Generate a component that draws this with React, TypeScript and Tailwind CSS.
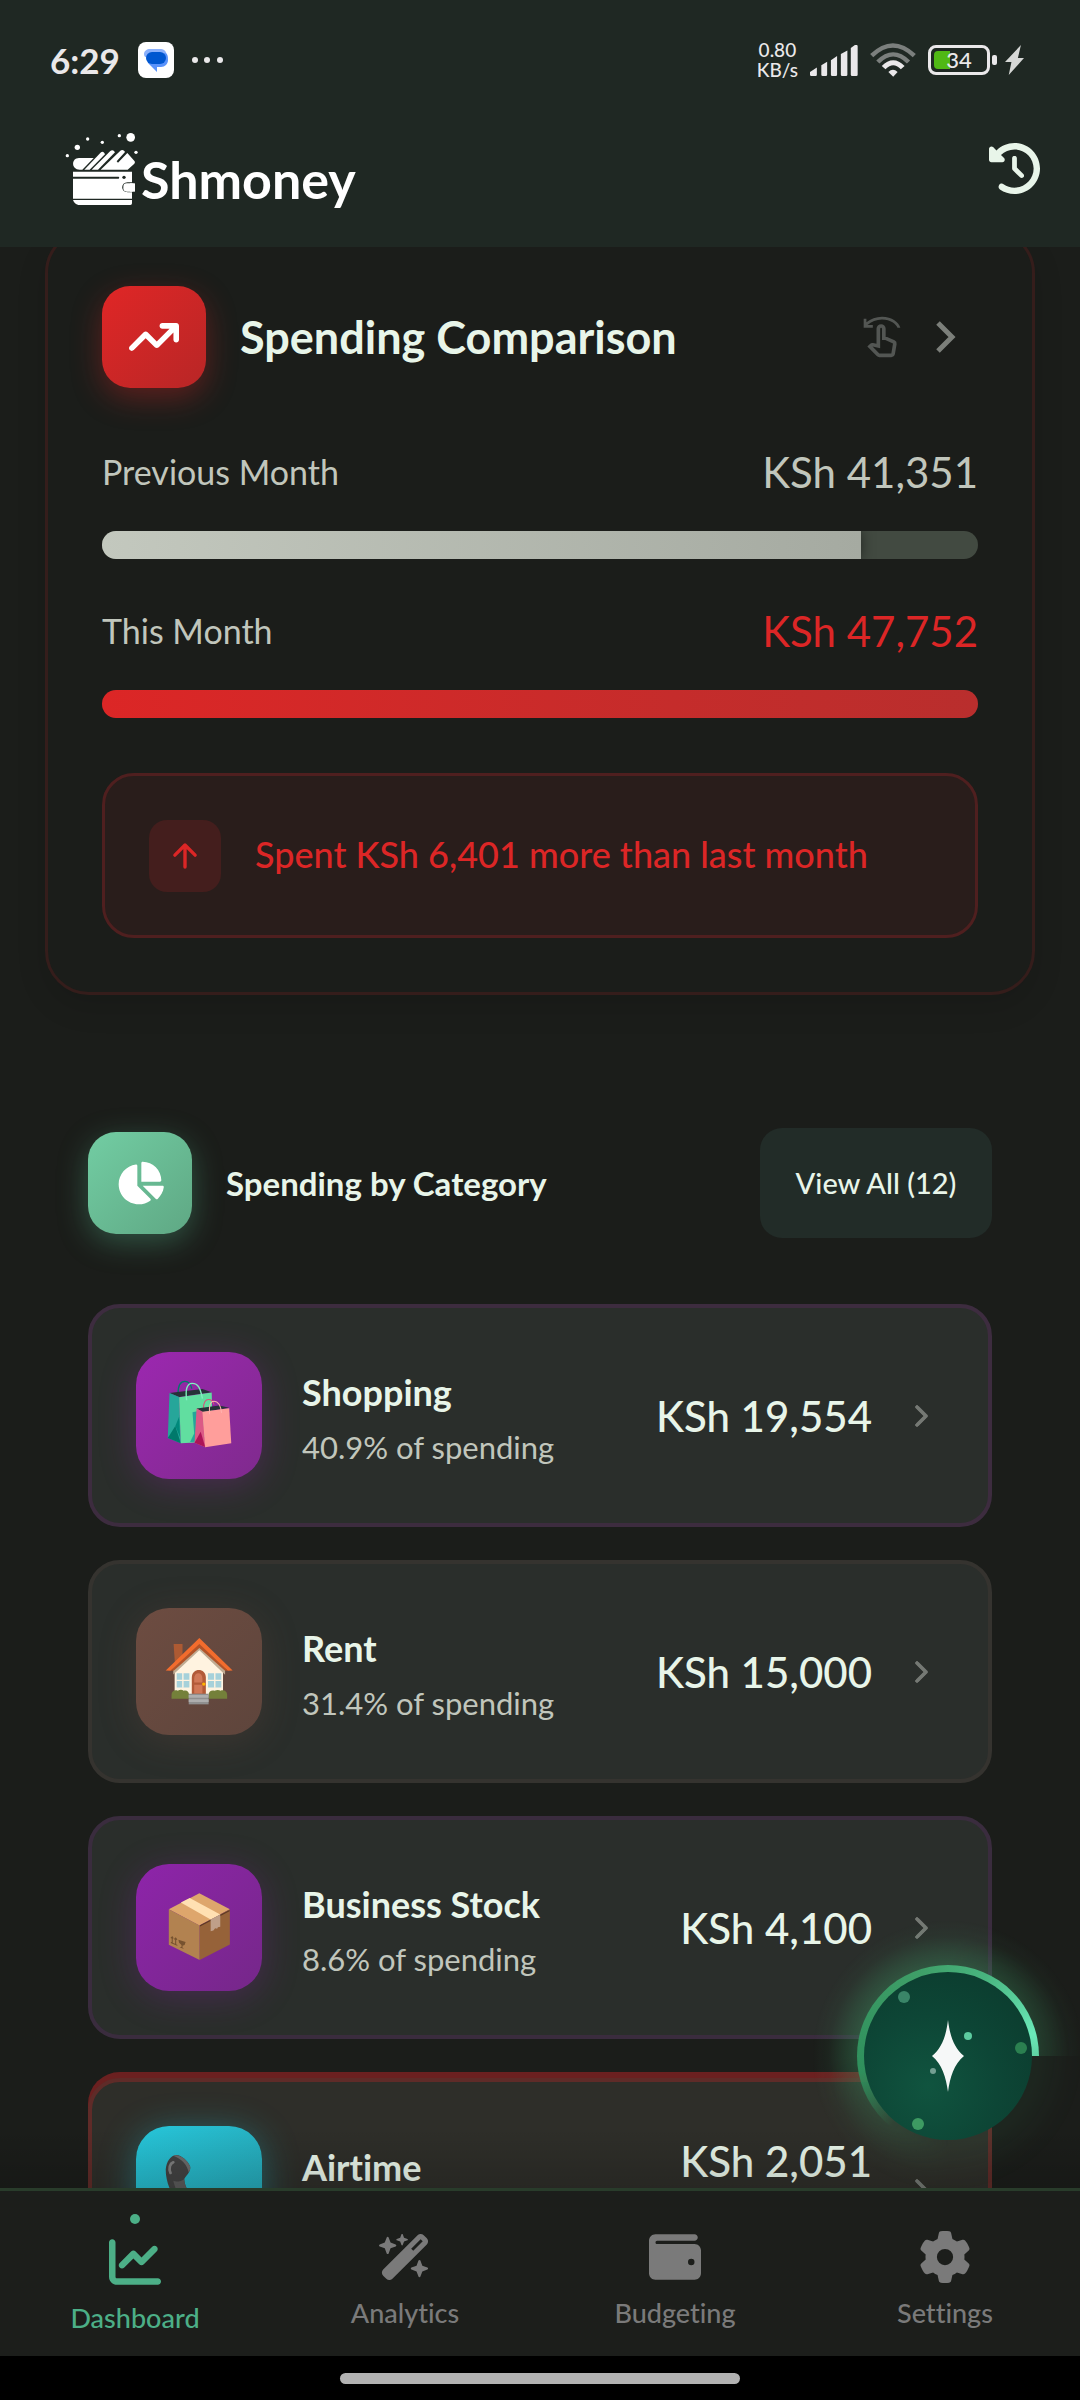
import type { ReactNode } from "react";
import { FaArrowTrendUp, FaChartLine, FaChartPie, FaChevronRight, FaClockRotateLeft, FaGear, FaWallet, FaWandMagicSparkles } from "react-icons/fa6";
import { IoArrowUpOutline } from "react-icons/io5";
import { MdOutlineSwipeLeft } from "react-icons/md";

type Category = {
  name: string;
  share?: string;
  amount: string;
  art: ReactNode;
  card: string;
  tile: string;
  overBudget?: boolean;
};

function BagsArt() {
  return (
    <svg viewBox="303 294 204 220" preserveAspectRatio="none" className="h-[73px] w-[70px]" aria-hidden="true">
      <path d="M344 338c0-24 8-37 20-37s17 8 20 22" fill="none" stroke="#00796b" strokeWidth="4" />
      <path d="M319 336l96-12 27 10-95 14z" fill="#263238" />
      <path d="M319 336l28 12 5 140-38-16z" fill="#26a69a" />
      <path d="M314 472l22-36 16 52z" fill="#00796b" />
      <path d="M336 436l11-28 3 62z" fill="#00897b" />
      <path d="M347 349l95-14 3 120-50 30-43 3z" fill="#61dea0" />
      <path d="M386 394l14-3v92l-21 1 12-26z" fill="#26a69a" />
      <path d="M369 358c-4-30 0-51 16-51 18 0 24 15 30 46" fill="none" stroke="#82efc0" strokeWidth="4" />
      <path d="M418 384c0-17 5-28 15-28 9 0 13 5 16 15" fill="none" stroke="#d8527c" strokeWidth="3" />
      <path d="M398 383l66-9 29 7-78 13z" fill="#263238" />
      <path d="M398 383l18 10 8 107-32-14z" fill="#db5a86" />
      <path d="M392 486l18-33 13 46z" fill="#ad1457" />
      <path d="M415 393l78-11 6 106-76 12z" fill="#ff9e9b" />
      <path d="M436 400c-2-24 1-39 13-39 14 0 19 13 22 35" fill="none" stroke="#ffb3ae" strokeWidth="3" />
    </svg>
  );
}

function HouseArt() {
  return (
    <svg viewBox="303 1062 204 220" preserveAspectRatio="none" className="h-[73px] w-[70px]" aria-hidden="true">
      <path d="M331 1089h26v45l-22 16z" fill="#ad5a33" />
      <path d="M334 1165l72-72 69 72v78H334z" fill="#fff3e0" />
      <path d="M330 1162l76-72 75 72v20l-75-74-76 73z" fill="#bfab93" />
      <path d="M308 1169l98-98 97 98-14 1-83-78-84 78z" fill="#f26c2d" />
      <path d="M322 1170l84-81 83 81-9-1-74-68-74 68z" fill="#b25328" />
      <path d="M340 1177h37v43h-37zM431 1177h39v43h-39z" fill="#a6d1da" />
      <path d="M358 1176v45M339 1199h39M451 1176v45M430 1199h41" stroke="#fff3e0" strokeWidth="4" />
      <path d="M384 1241v-50c0-31 41-31 41 0v50z" fill="#b25a38" />
      <path d="M391 1205v-12c0-21 24-21 24 0v12zM391 1212h24v26h-24z" fill="#d17857" />
      <circle cx="419" cy="1210" r="5" fill="#ffb300" />
      <path d="M325 1254v-12c0-11 10-16 18-12 7-4 14-3 17 0 9-3 16 2 16 12v12zM433 1254v-12c0-11 10-15 17-12 7-3 13-3 18 0 9-4 19 2 19 12v12z" fill="#74803a" />
      <path d="M375 1239h58v32h-58z" fill="#8f8f8f" />
      <path d="M375 1243h58v8h-58zM375 1256h58v8h-58z" fill="#aeaeae" />
    </svg>
  );
}

function PackageArt() {
  return (
    <svg viewBox="303 329 204 220" preserveAspectRatio="none" className="h-[73px] w-[70px]" aria-hidden="true">
      <path d="M317 384l89-48 89 48-89 49z" fill="#dea66c" />
      <path d="M317 384l90 49v104l-90-46z" fill="#b28250" />
      <path d="M495 384l-88 49v104l88-47z" fill="#966239" />
      <path d="M408 432l86-46v4l-86 46z" fill="#5d3a23" />
      <path d="M352 364l26-14 89 50-28 15z" fill="#ffe0b2" />
      <path d="M439 415l28-15v37l-7 1-2 5-6-2-5 7-8 2z" fill="#bf9f89" />
      <path d="M323 484l19 9M327 486v-18m-4 3l4-4 3 5M337 490v-18m-4 3l4-4 4 5" fill="none" stroke="#76522f" strokeWidth="3" />
      <path d="M345 476l21 7-3 9-6 2v6l5 4-13-5 5-2v-5l-7-7z" fill="#76522f" />
    </svg>
  );
}

function PhoneArt() {
  return (
    <svg viewBox="303 1112 204 220" preserveAspectRatio="none" className="h-[73px] w-[70px]" aria-hidden="true">
      <path d="M308 1162c2-24 14-43 31-44 15 1 32 16 40 34 3 14-7 22-17 38 1 40 44 84 78 86 16-12 26-18 40-10 18 10 28 28 22 42-12 22-44 24-70 16-70-22-124-92-124-162z" fill="#424242" />
      <path d="M330 1196c10 4 22 2 32-6 1 40 44 84 78 86-9 9-14 17-14 28-46-18-86-60-96-108z" fill="#5b5b5b" />
      <path d="M330 1120c18-6 40 12 49 32 1 8 0 14-4 18-4-22-22-42-45-50z" fill="#6b6b6b" />
      <path d="M322 1172c-6-14-2-28 8-32" fill="none" stroke="#7e7e7e" strokeWidth="8" strokeLinecap="round" />
    </svg>
  );
}

const categories: Category[] = [
  {
    name: "Shopping",
    share: "40.9% of spending",
    amount: "KSh 19,554",
    art: <BagsArt />,
    card: "border-[#3d2c3f] bg-[#2a2e2b]",
    tile: "from-[#9c27b0] to-[#7f2a8d] shadow-[0_6px_36px_rgba(156,39,176,0.3)]",
  },
  {
    name: "Rent",
    share: "31.4% of spending",
    amount: "KSh 15,000",
    art: <HouseArt />,
    card: "border-[#35332f] bg-[#2a2e2b]",
    tile: "from-[#6d4c41] to-[#5e453c] shadow-[0_6px_36px_rgba(109,76,65,0.3)]",
  },
  {
    name: "Business Stock",
    share: "8.6% of spending",
    amount: "KSh 4,100",
    art: <PackageArt />,
    card: "border-[#3a2c3e] bg-[#2a2e2b]",
    tile: "from-[#8e24aa] to-[#752789] shadow-[0_6px_36px_rgba(142,36,170,0.3)]",
  },
  {
    name: "Airtime",
    amount: "KSh 2,051",
    art: <PhoneArt />,
    card: "border-[#5f2b28] bg-[#2e2e29]",
    tile: "from-[#26c6da] to-[#26a0ae] shadow-[0_6px_36px_rgba(38,198,218,0.4)]",
    overBudget: true,
  },
];

const tabs = [
  { label: "Dashboard", icon: FaChartLine, active: true },
  { label: "Analytics", icon: FaWandMagicSparkles, active: false },
  { label: "Budgeting", icon: FaWallet, active: false },
  { label: "Settings", icon: FaGear, active: false },
];

function StatusBar() {
  return (
    <div className="flex h-[120px] items-center justify-between pr-14 pl-[50px] text-[#eae8ea]">
      <div className="flex items-center gap-[18px]">
        <span className="text-[35px] leading-10 font-bold">6:29</span>
        <svg viewBox="0 0 36 36" className="size-9" aria-hidden="true">
          <rect width="36" height="36" rx="8" fill="#fff" />
          <path d="M12 7h11c4 0 6 4 6 8H10c-3 1-4-1-4-3 0-3 3-5 6-5z" fill="#8ab0fb" />
          <path d="M27 11c3 1 3 4 3 7 0 4-3 7-7 7h-4v5l-9-9z" fill="#5a93fb" />
          <rect x="8" y="10" width="20" height="12" rx="6" fill="#0057d0" />
        </svg>
        <svg viewBox="0 0 31 6" className="h-[6px] w-[31px]" fill="currentColor" aria-hidden="true">
          <circle cx="3" cy="3" r="3" />
          <circle cx="15" cy="3" r="3" />
          <circle cx="28" cy="3" r="3" />
        </svg>
      </div>
      <div className="flex items-center gap-3">
        <div className="text-center text-[19px] leading-5 font-medium">
          <div>0.80</div>
          <div>KB/s</div>
        </div>
        <svg viewBox="776 136 140 92" preserveAspectRatio="none" className="h-[31px] w-12" fill="currentColor" aria-hidden="true">
          <path d="M776 224v-8l20-13v22q0 3-4 3h-12q-4 0-4-4zM809 224v-28l17-10v38q0 4-4 4h-9q-4 0-4-4zM837 224v-43l18-12v55q0 4-4 4h-10q-4 0-4-4zM866 224v-61l19-11v72q0 4-4 4h-11q-4 0-4-4zM895 224v-79l12-9q8-2 8 4v84q0 4-4 4h-12q-4 0-4-4z" />
        </svg>
        <svg viewBox="951 130 135 102" preserveAspectRatio="none" className="h-[34px] w-[46px]" fill="none" stroke="currentColor" aria-hidden="true">
          <path d="M956 168q62-61 125 0M974 187q45-46 90 0" strokeWidth="13" opacity="0.45" />
          <path d="M991 204q28-30 56 0" strokeWidth="15" />
          <path d="M1005 217q13-14 27 0l-13 14z" fill="currentColor" stroke="none" />
        </svg>
        <div className="flex items-center gap-[2px]">
          <div className="relative flex h-[30px] w-[62px] items-center justify-center rounded-[8px] border-[3px] border-current">
            <div className="absolute top-[3px] left-[3px] h-[18px] w-4 rounded-l-[4px] bg-[#50b815]" />
            <span className="relative text-[22px] leading-6 font-medium">34</span>
          </div>
          <div className="h-[10px] w-[5px] rounded-[2px] bg-current" />
          <svg viewBox="1349 136 56 90" preserveAspectRatio="none" className="ml-[6px] h-[30px] w-[19px]" fill="#d6d8d6" aria-hidden="true">
            <path d="M1396 136l-9 39h18l-45 51 8-39h-19z" />
          </svg>
        </div>
      </div>
    </div>
  );
}

function Logo() {
  return (
    <div className="flex items-center gap-[2px] text-white">
      <svg viewBox="15 30 222 222" className="size-[74px]" fill="currentColor" aria-hidden="true">
        <circle cx="22" cy="101" r="5" />
        <circle cx="52" cy="76" r="8" />
        <circle cx="83" cy="51" r="5" />
        <circle cx="127" cy="61" r="5" />
        <circle cx="178" cy="41" r="5" />
        <circle cx="212" cy="46" r="13" />
        <circle cx="228" cy="91" r="5" />
        <path d="M57 108h44l-34 35h-8c-26 0-26-35-2-35z" />
        <path d="M73 143l50-52q5-4 10 2l2 4-46 46z" />
        <path d="M95 143l56-56q6-5 12 1l2 3-51 52z" />
        <path d="M122 143l59-57q6-5 12 1l2 3-25 28 4 4 28-29 22 25q2 4-1 7l-20 18z" />
        <path d="M39 149h177v32h-13c-22 0-22 30 0 30h13v19H39v-60h137q4-3 0-6H39z" />
        <circle cx="192" cy="166" r="5" fill="#1f2823" />
        <rect x="190" y="184" width="35" height="25" rx="10" />
        <rect x="210" y="184" width="15" height="25" />
        <path d="M39 234h177v10q0 5-5 5H55q-12-3-16-15z" />
      </svg>
      <span className="pt-5 text-[52px] leading-[50px] font-bold">Shmoney</span>
    </div>
  );
}

function MonthBar({ label, amount, percent, current }: { label: string; amount: string; percent: number; current?: boolean }) {
  return (
    <div>
      <div className="flex h-[60px] items-center justify-between">
        <span className="text-[34px] leading-[60px] text-[#c1c6bc]">{label}</span>
        <span className={`text-[42px] leading-[60px] ${current ? "text-[#dc2626]" : "text-[#c1c6bc]"}`}>{amount}</span>
      </div>
      <div
        role="progressbar"
        aria-label={label}
        aria-valuenow={percent}
        className="mt-[29px] h-7 overflow-hidden rounded-full bg-[#424a41]"
      >
        <div
          className={`h-full bg-linear-to-r ${current ? "from-[#dc2626] to-[#b92e2d]" : "from-[#c3c8be] to-[#a5aaa1] shadow-[0_0_14px_rgba(0,0,0,0.5)]"}`}
          style={{ width: `${percent}%` }}
        />
      </div>
    </div>
  );
}

function SpendingComparison() {
  return (
    <section className="mx-[45px] -mt-[18px] rounded-[44px] border-[3px] border-[#351d1b] p-[54px] shadow-[0_12px_30px_rgba(0,0,0,0.12)]">
      <div className="flex items-center">
        <div className="flex h-[102px] w-[104px] items-center justify-center rounded-[28px] bg-linear-to-br from-[#e02626] to-[#b82626] shadow-[0_10px_30px_rgba(220,38,38,0.35)]">
          <FaArrowTrendUp className="size-[50px] text-white" />
        </div>
        <h2 className="ml-[34px] flex-1 text-[45px] leading-[60px] font-bold">Spending Comparison</h2>
        <MdOutlineSwipeLeft className="size-11 text-[#535653]" />
        <button type="button" aria-label="Open comparison" className="mr-[14px] ml-6">
          <svg viewBox="0 0 36 36" className="size-9" fill="none" stroke="#7c7f7a" strokeWidth="5" aria-hidden="true">
            <path d="M10 4l14 14-14 14" />
          </svg>
        </button>
      </div>
      <div className="mt-[54px] grid gap-[42px]">
        <MonthBar label="Previous Month" amount="KSh 41,351" percent={86.6} />
        <MonthBar label="This Month" amount="KSh 47,752" percent={100} current />
      </div>
      <div className="mt-[55px] flex h-[165px] items-center rounded-[32px] border-[3px] border-[#4f1f1f] bg-[#291d1b] px-11 text-[#dc2626]">
        <div className="flex size-[72px] items-center justify-center rounded-[18px] bg-[#441e1d]">
          <IoArrowUpOutline className="size-9" />
        </div>
        <p className="ml-[34px] pb-1 text-[36px] leading-[50px] font-medium">Spent KSh 6,401 more than last month</p>
      </div>
    </section>
  );
}

function CategoryCard({ category }: { category: Category }) {
  const row = (
    <button type="button" className={`flex h-[223px] w-full items-center rounded-[32px] border-4 pr-14 pl-11 text-left ${category.card}`}>
      <span className={`flex h-[127px] w-[126px] items-center justify-center rounded-[33px] bg-linear-to-br ${category.tile}`}>{category.art}</span>
      <span className={`ml-10 flex flex-1 flex-col ${category.overBudget ? "pb-[46px]" : "pt-2"}`}>
        <span className="text-[36px] leading-[54px] font-bold">{category.name}</span>
        {category.share && <span className="text-[31px] leading-[56px] text-[#c1c6bc]">{category.share}</span>}
      </span>
      <span className={`text-[42px] leading-[54px] font-medium ${category.overBudget ? "pb-[58px]" : ""}`}>{category.amount}</span>
      <FaChevronRight className="ml-9 size-6 text-[#757974]" stroke="currentColor" strokeWidth="20" />
    </button>
  );
  return category.overBudget ? <li className="rounded-[32px] bg-[#6b2020] pt-[6px]">{row}</li> : <li>{row}</li>;
}

function SpendingByCategory() {
  return (
    <section className="mx-[88px] mt-[133px]">
      <div className="flex items-center">
        <div className="flex h-[102px] w-[104px] items-center justify-center rounded-[28px] bg-linear-to-br from-[#72cda3] to-[#5fa884] shadow-[0_8px_30px_rgba(88,190,145,0.35)]">
          <FaChartPie className="size-[48px] text-white" />
        </div>
        <h2 className="ml-[34px] flex-1 text-[33px] leading-[50px] font-bold">Spending by Category</h2>
        <button type="button" className="h-[110px] w-[232px] rounded-[22px] bg-[#222c28] text-[29px] font-medium">
          View All (12)
        </button>
      </div>
      <ul className="mt-[66px] grid gap-[33px]">
        {categories.map((category) => (
          <CategoryCard key={category.name} category={category} />
        ))}
      </ul>
    </section>
  );
}

function AssistantButton() {
  return (
    <button type="button" aria-label="Assistant" className="absolute right-[41px] bottom-[41px] size-[182px] rounded-full">
      <span className="absolute -inset-[45px] rounded-full bg-[radial-gradient(closest-side,rgba(62,160,105,0.34)_66%,rgba(62,160,105,0.22)_76%,rgba(62,160,105,0.06)_88%,transparent_100%)] [mask-image:conic-gradient(from_90deg,rgba(0,0,0,0.2)_0%,rgba(0,0,0,0.2)_25%,#000_50%,#000_75%,rgba(0,0,0,0.7)_100%)]" />
      <span className="absolute inset-0 rounded-full bg-[conic-gradient(from_90deg,transparent_0%,transparent_36%,#2f8f5c_47%,#3f9f68_70%,#48b57f_82%,#6be9b9_96%,#5fd3a3_100%)]" />
      <span className="absolute inset-[7px] rounded-full bg-[radial-gradient(circle_at_38%_68%,#10543f_0%,#0d4636_45%,#0b382b_100%)]" />
      <svg viewBox="0 0 182 182" className="absolute inset-0" aria-hidden="true">
        <circle cx="47" cy="32" r="6" fill="#3a8568" />
        <circle cx="164" cy="83" r="6" fill="#2b8050" />
        <circle cx="61" cy="159" r="6" fill="#3d9a62" />
        <circle cx="76" cy="106" r="3" fill="#749f92" />
        <path d="M91 55C93 71 97 83 107 91C97 99 93 112 91 127C89 112 85 99 75 91C85 83 89 71 91 55Z" fill="#f6f8f8" />
        <circle cx="111" cy="71" r="4" fill="#5dcb9f" />
      </svg>
    </button>
  );
}

function BottomNav() {
  return (
    <nav className="grid h-[168px] shrink-0 grid-cols-4 border-t-[3px] border-[#293c2b] bg-[#1c1e1b]">
      {tabs.map(({ label, icon: Icon, active }) => (
        <a
          key={label}
          href={`#${label.toLowerCase()}`}
          aria-current={active ? "page" : undefined}
          className={`flex flex-col items-center text-[27px] leading-9 font-medium ${active ? "pt-[23px] text-[#4caf87]" : "pt-10 text-[#7a7a7a]"}`}
        >
          {active && <span className="mb-3 size-[10px] rounded-full bg-current" />}
          <Icon className="size-[52px]" />
          <span className="mt-3">{label}</span>
        </a>
      ))}
    </nav>
  );
}

export default function App() {
  return (
    <div className="flex h-screen flex-col overflow-hidden bg-[#1b1d1a] font-['Lato','Liberation_Sans',sans-serif] text-[#e8f5e9] [font-variant-ligatures:none]">
      <header className="shrink-0 bg-[#1f2823]">
        <StatusBar />
        <div className="flex h-[127px] items-center justify-between px-10 pb-[30px] pl-[65px]">
          <Logo />
          <button type="button" aria-label="History">
            <FaClockRotateLeft className="size-[51px]" />
          </button>
        </div>
      </header>
      <main className="relative min-h-0 flex-1 overflow-hidden">
        <SpendingComparison />
        <SpendingByCategory />
        <div className="pointer-events-none absolute inset-x-0 bottom-0 h-[60px] bg-linear-to-b from-transparent to-black/15" />
        <AssistantButton />
      </main>
      <BottomNav />
      <div className="flex h-11 shrink-0 items-center justify-center bg-black">
        <div className="h-[11px] w-[400px] rounded-full bg-[#b2b2b2]" />
      </div>
    </div>
  );
}
